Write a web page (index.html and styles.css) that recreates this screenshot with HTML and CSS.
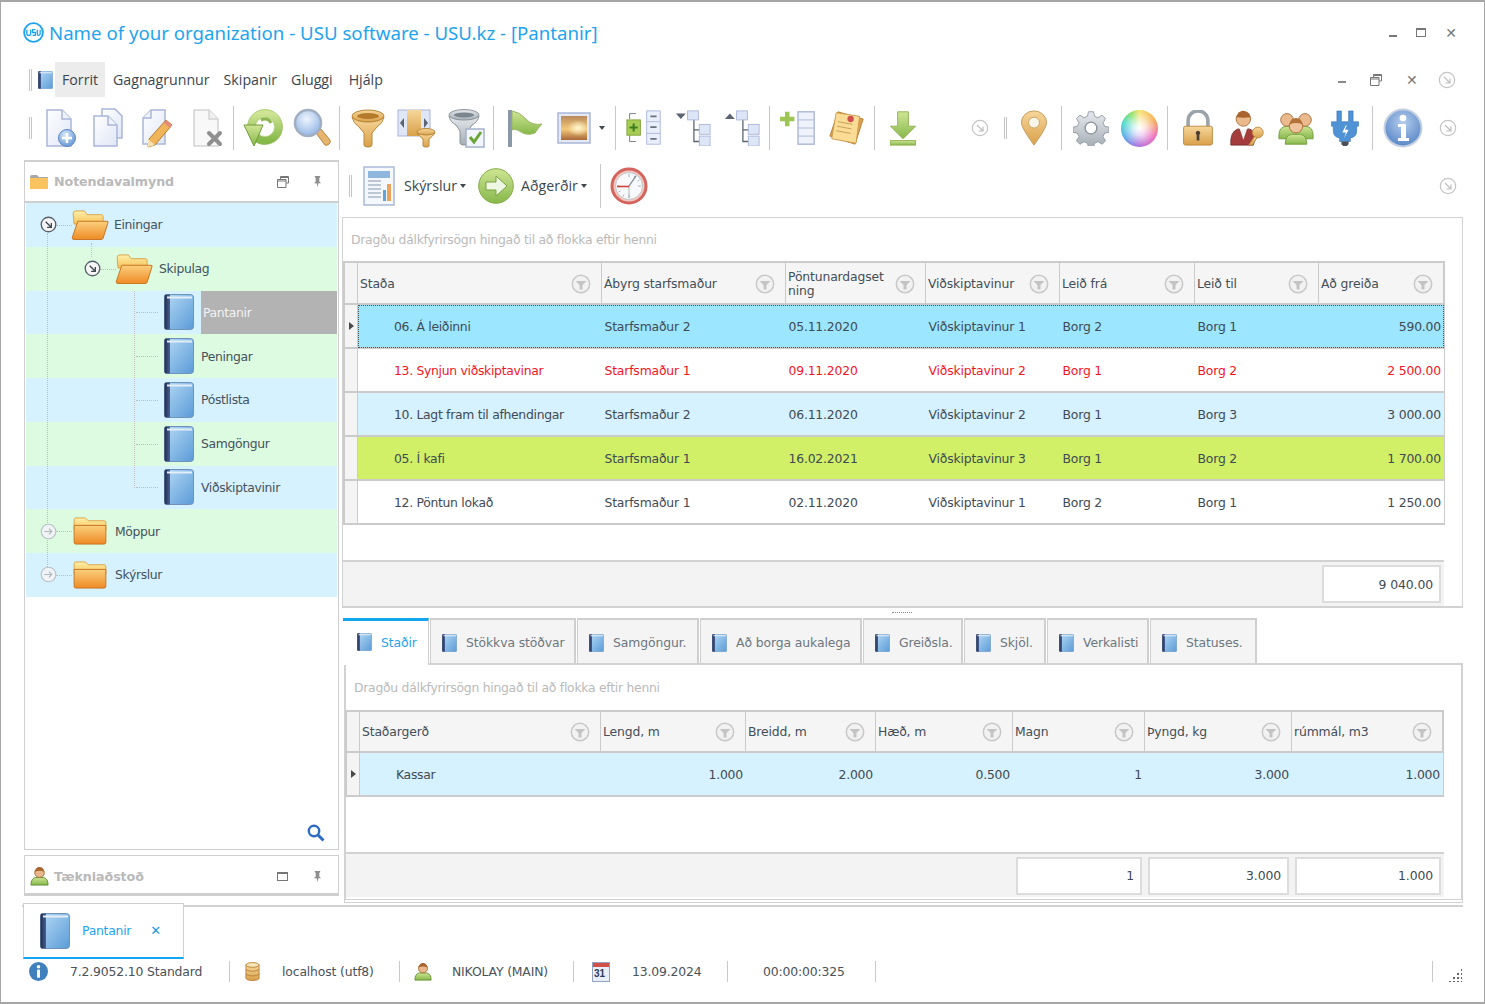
FILE: index.html
```html
<!DOCTYPE html>
<html lang="is">
<head>
<meta charset="utf-8">
<title>Name of your organization - USU software - USU.kz - [Pantanir]</title>
<link rel="stylesheet" href="styles.css">
</head>
<body>
<svg class="defs" aria-hidden="true">
<defs>
<linearGradient id="gBook" x1="0" y1="0" x2="1" y2="1"><stop offset="0" stop-color="#b5daf5"/><stop offset="1" stop-color="#5b9bd8"/></linearGradient>
<linearGradient id="gSpine" x1="0" y1="0" x2="1" y2="0"><stop offset="0" stop-color="#1f2c4d"/><stop offset="1" stop-color="#4a5f92"/></linearGradient>
<linearGradient id="gFolderB" x1="0" y1="0" x2="0" y2="1"><stop offset="0" stop-color="#fff0a8"/><stop offset="1" stop-color="#f6c05a"/></linearGradient>
<linearGradient id="gFolderF" x1="0" y1="0" x2="0" y2="1"><stop offset="0" stop-color="#fbd07c"/><stop offset="1" stop-color="#ee8a26"/></linearGradient>
<linearGradient id="gGold" x1="0" y1="0" x2="0" y2="1"><stop offset="0" stop-color="#f6d79a"/><stop offset="1" stop-color="#d9a04a"/></linearGradient>
<linearGradient id="gGreen" x1="0" y1="0" x2="0" y2="1"><stop offset="0" stop-color="#cfe595"/><stop offset="1" stop-color="#86b84a"/></linearGradient>
<linearGradient id="gPage" x1="0" y1="0" x2="1" y2="1"><stop offset="0" stop-color="#ffffff"/><stop offset="1" stop-color="#dfe6f6"/></linearGradient>
<linearGradient id="gGrey" x1="0" y1="0" x2="0" y2="1"><stop offset="0" stop-color="#e6e9ed"/><stop offset="1" stop-color="#a4adb5"/></linearGradient>
<radialGradient id="gBlue" cx=".4" cy=".3" r=".8"><stop offset="0" stop-color="#d6e8fb"/><stop offset="1" stop-color="#5b8fd0"/></radialGradient>
<radialGradient id="gBlueL" cx=".45" cy=".35" r=".75"><stop offset="0" stop-color="#eef5fd"/><stop offset="1" stop-color="#86ade2"/></radialGradient>
<radialGradient id="gInfo" cx=".5" cy=".35" r=".75"><stop offset="0" stop-color="#b6cdee"/><stop offset="1" stop-color="#4a7cc0"/></radialGradient>
<linearGradient id="gSun" x1="0" y1="0" x2="0" y2="1"><stop offset="0" stop-color="#b98a5c"/><stop offset=".55" stop-color="#f3c878"/><stop offset="1" stop-color="#a8683a"/></linearGradient>
<radialGradient id="gGlow"><stop offset="0" stop-color="#fff8d0"/><stop offset="1" stop-color="#fff8d0" stop-opacity="0"/></radialGradient>

<symbol id="i-book" viewBox="0 0 30 36"><rect x=".5" y=".5" width="29" height="35" rx="3" fill="url(#gBook)" stroke="#6f93ba"/><path d="M3 .5H1.5Q.5 .5 .5 2V34q0 1.500 1.500 1.500H6V.5z" fill="url(#gSpine)"/><path d="M3 3.500H28" stroke="#e4eef7" stroke-width="2"/></symbol>
<symbol id="i-fopen" viewBox="0 0 40 32"><path d="M2 4q0-3 3-3h9l3 4h15q2 0 2 2v8H3z" fill="url(#gFolderB)" stroke="#d9a349"/><path d="M7 12h31q2 0 1 2l-5 16q-.5 1.500-2 1.500H3q-2 0-2-2z" fill="url(#gFolderF)" stroke="#c5711c"/></symbol>
<symbol id="i-fclosed" viewBox="0 0 36 30"><path d="M1 3q0-2 2-2h10l3 3h17q2 0 2 2v8H1z" fill="url(#gFolderB)" stroke="#d9a349"/><path d="M1 9h34v18q0 2-2 2H3q-2 0-2-2z" fill="url(#gFolderF)" stroke="#c5711c"/></symbol>
<symbol id="i-page" viewBox="0 0 40 40"><path d="M8 2h15l9 9v27H8z" fill="url(#gPage)" stroke="#aab6d8" stroke-width="1.500"/><path d="M23 2v9h9" fill="#eef2fb" stroke="#aab6d8" stroke-width="1.500"/></symbol>
<symbol id="i-docadd" viewBox="0 0 40 40"><use href="#i-page"/><circle cx="28" cy="30" r="8.500" fill="url(#gBlue)" stroke="#5a88c2"/><path d="M28 25v10M23 30h10" stroke="#fff" stroke-width="2.500"/></symbol>
<symbol id="i-doccopy" viewBox="0 0 40 40"><path d="M14 1h13l7 7v22H14z" fill="url(#gPage)" stroke="#aab6d8" stroke-width="1.500"/><path d="M6 8h14l9 9v21H6z" fill="url(#gPage)" stroke="#aab6d8" stroke-width="1.500"/><path d="M20 8v9h9" fill="#eef2fb" stroke="#aab6d8" stroke-width="1.500"/></symbol>
<symbol id="i-docedit" viewBox="0 0 40 40"><path d="M14 2h14v34H6V10z" fill="url(#gPage)" stroke="#aab6d8" stroke-width="1.500"/><path d="M14 2v8H6" fill="#eef2fb" stroke="#aab6d8" stroke-width="1.500"/><path d="M29 12l6 5-17 20-7 2 1-8z" fill="#f0b45a" stroke="#b77e2e"/><path d="M29 12l6 5-2 3-6-5z" fill="#e88a7a"/><path d="M11 31l7 6-7 2z" fill="#f6e0b6"/></symbol>
<symbol id="i-docdel" viewBox="0 0 40 40"><path d="M8 2h15l9 9v27H8z" fill="#f8f8f8" stroke="#d4d4d4" stroke-width="1.500"/><path d="M23 2v9h9" fill="#f0f0f0" stroke="#d4d4d4" stroke-width="1.500"/><path d="M23 25l11 11M34 25L23 36" stroke="#8f8f8f" stroke-width="4" stroke-linecap="round"/></symbol>
<symbol id="i-refresh" viewBox="0 0 40 40"><circle cx="22" cy="19" r="13.500" fill="none" stroke="url(#gGreen)" stroke-width="8"/><circle cx="22" cy="19" r="17.500" fill="none" stroke="#8cb550" stroke-width=".6"/><circle cx="22" cy="19" r="9.500" fill="#fff" stroke="#a5c46a" stroke-width=".6"/><path d="M1 17h19L11 38z" fill="url(#gGreen)" stroke="#6e9c38"/><path d="M18 12q7-3 10 3" fill="none" stroke="#8cb550" stroke-width="3"/></symbol>
<symbol id="i-zoom" viewBox="0 0 40 40"><path d="M24 25l5-4 9 11q1 2-1 4t-4 1z" fill="#e6b46c" stroke="#b78540"/><circle cx="16" cy="15" r="13" fill="url(#gBlueL)" stroke="#a2aec2" stroke-width="2.500"/></symbol>
<symbol id="i-funnel" viewBox="0 0 40 40"><ellipse cx="20" cy="8" rx="16" ry="6" fill="url(#gGold)" stroke="#b9883c"/><path d="M4 9q1 6 7 10l5 6v12q0 2 4 2t4-2V25l5-6q6-4 7-10-4 5-16 5T4 9z" fill="url(#gGold)" stroke="#b9883c"/><ellipse cx="20" cy="8" rx="11" ry="3" fill="#b57a2c"/></symbol>
<symbol id="i-colfilter" viewBox="0 0 40 40"><rect x="1" y="2" width="32" height="26" fill="#dfe6f6" stroke="#aab6d8"/><rect x="10" y="2" width="14" height="26" fill="url(#gGold)"/><path d="M7 10l-4 5 4 5zM27 10l4 5-4 5z" fill="#5b6472"/><ellipse cx="29" cy="24" rx="9" ry="3.500" fill="url(#gGold)" stroke="#b9883c"/><path d="M20 25q2 3 6 6v7q0 1 3 1t3-1v-7q4-3 6-6-3 2-9 2t-9-2z" fill="url(#gGold)" stroke="#b9883c"/></symbol>
<symbol id="i-funnelchk" viewBox="0 0 40 40"><ellipse cx="18" cy="7" rx="15" ry="5.500" fill="url(#gGrey)" stroke="#8b949c"/><path d="M3 8q1 6 7 9l4 6v12q0 2 4 2t4-2V23l4-6q6-3 7-9-4 4-15 4T3 8z" fill="url(#gGrey)" stroke="#8b949c"/><ellipse cx="18" cy="7" rx="10" ry="2.600" fill="#7b858d"/><rect x="20" y="21" width="18" height="18" fill="#f2f5fb" stroke="#a4b0ce" stroke-width="1.500"/><path d="M24 29l4 5 7-10" stroke="#6aa637" stroke-width="3" fill="none"/></symbol>
<symbol id="i-flag" viewBox="0 0 40 40"><rect x="3" y="2" width="4" height="37" fill="#8b98a8"/><path d="M7 3q8 1 14 8t16 5q-4 4-7 9-8 3-14-1t-9-2z" fill="url(#gGreen)" stroke="#9ab866"/></symbol>
<symbol id="i-pic" viewBox="0 0 40 40"><rect x="4" y="5" width="32" height="30" fill="#e4e9f6" stroke="#aab6d8" stroke-width="1.500"/><rect x="7" y="8" width="26" height="24" fill="url(#gSun)"/><ellipse cx="24" cy="20" rx="11" ry="8" fill="url(#gGlow)"/></symbol>
<symbol id="i-treeplus" viewBox="0 0 40 40"><rect x="23" y="1" width="15" height="37" fill="#eaf0fb" stroke="#aab6d8"/><path d="M23 13h15M23 26h15" stroke="#aab6d8"/><path d="M27 7h7M27 19h7M27 32h7" stroke="#6a7280" stroke-width="2"/><path d="M4 10V4h7M4 28v7h7" fill="none" stroke="#6a7280"/><rect x="1" y="11" width="15" height="17" fill="#a6cc54" stroke="#7fa33a"/><path d="M8.500 15v9M4 19.500h9" stroke="#3f7a1f" stroke-width="2.200"/></symbol>
<symbol id="i-treedn" viewBox="0 0 40 40"><path d="M1 4h11l-5.500 6z" fill="#5b6472"/><path d="M21 8v27h10M21 22h10" fill="none" stroke="#59626e" stroke-width="1.400"/><rect x="14" y="1" width="12" height="10" fill="#dde6f6" stroke="#aab6d8"/><rect x="27" y="16" width="12" height="11" fill="#dde6f6" stroke="#aab6d8"/><rect x="27" y="29" width="12" height="11" fill="#dde6f6" stroke="#aab6d8"/></symbol>
<symbol id="i-treeup" viewBox="0 0 40 40"><path d="M1 10h11L6.500 4z" fill="#5b6472"/><path d="M21 8v27h10M21 22h10" fill="none" stroke="#59626e" stroke-width="1.400"/><rect x="14" y="1" width="12" height="10" fill="#dde6f6" stroke="#aab6d8"/><rect x="27" y="16" width="12" height="11" fill="#dde6f6" stroke="#aab6d8"/><rect x="27" y="29" width="12" height="11" fill="#dde6f6" stroke="#aab6d8"/></symbol>
<symbol id="i-addrow" viewBox="0 0 40 40"><rect x="20" y="2" width="18" height="36" fill="#eef2fb" stroke="#aab6d8" stroke-width="1.500"/><path d="M20 11h18M20 20h18M20 29h18" stroke="#aab6d8"/><path d="M8 2v16M0 10h16" stroke="#9cc553" stroke-width="5"/></symbol>
<symbol id="i-note" viewBox="0 0 40 40"><path d="M10 2l28 8-9 28-28-9z" fill="#d9a050" stroke="#b87f35"/><path d="M8 3l26 4-4 30L3 32z" fill="#fbdc94" stroke="#c99a4c"/><path d="M10 13l16 3M9 18l16 3M8 23l16 3" stroke="#c09a58"/><circle cx="24" cy="10" r="3.500" fill="#d24f4f"/></symbol>
<symbol id="i-down" viewBox="0 0 40 40"><path d="M14 2h12v16h8L20 32 6 18h8z" fill="url(#gGreen)" stroke="#8fb050"/><rect x="6" y="34" width="28" height="5" fill="url(#gGreen)" stroke="#8fb050"/></symbol>
<symbol id="i-pin" viewBox="0 0 40 40"><path d="M20 39Q6 20 6 14a14 13 0 0 1 28 0q0 6-14 25z" fill="url(#gGold)" stroke="#c0995a"/><circle cx="20" cy="14" r="6" fill="#f8f4e8" stroke="#c6a262"/></symbol>
<symbol id="i-gear" viewBox="0 0 40 40"><path d="M17 1h6l1 5 4 2 5-3 4 4-3 5 2 4 5 1v6l-5 1-2 4 3 5-4 4-5-3-4 2-1 5h-6l-1-5-4-2-5 3-4-4 3-5-2-4-5-1v-6l5-1 2-4-3-5 4-4 5 3 4-2z" transform="translate(1 1) scale(.95)" fill="url(#gGrey)" stroke="#8b949c"/><circle cx="20" cy="20" r="6.500" fill="#fff" stroke="#8b949c" stroke-width="1.500"/></symbol>
<symbol id="i-lock" viewBox="0 0 40 40"><path d="M9 20V12a11 11 0 0 1 22 0v8" fill="none" stroke="#9aa3ab" stroke-width="4"/><rect x="4" y="18" width="32" height="21" rx="2" fill="url(#gGold)" stroke="#b9883c"/><path d="M20 23a2.500 2.500 0 0 1 1.500 4.500V34h-3v-6.500A2.500 2.500 0 0 1 20 23z" fill="#4d4032"/></symbol>
<symbol id="i-userkey" viewBox="0 0 40 40"><circle cx="16" cy="10" r="8" fill="#eab98e" stroke="#a86c38"/><path d="M8 8q3-8 9-7t7 7q-8 1-16 0z" fill="#a8652f"/><path d="M2 39q-1-15 8-18 6 3 12 0 7 2 8 8l-3 10z" fill="#a33c3c" stroke="#7a2c2c"/><path d="M12 21h8l-4 12z" fill="#f4f4f4"/><circle cx="32" cy="25" r="6" fill="url(#gGold)" stroke="#b9883c"/><path d="M28 30l-6 9h4l5-8" fill="url(#gGold)" stroke="#b9883c"/></symbol>
<symbol id="i-group" viewBox="0 0 40 40"><path d="M1 28q0-9 8-10h22q8 1 8 10v4H1z" fill="url(#gGreen)" stroke="#6f9c3c"/><circle cx="10" cy="11" r="7" fill="#eab98e" stroke="#a86c38"/><circle cx="30" cy="11" r="7" fill="#eab98e" stroke="#a86c38"/><path d="M8 38q0-10 7-11h10q7 1 7 11z" fill="url(#gGreen)" stroke="#6f9c3c"/><circle cx="20" cy="18" r="7.500" fill="#efc49c" stroke="#a86c38"/><path d="M13 16q1-7 7-7t7 7q-7-3-14 0z" fill="#b37238"/></symbol>
<symbol id="i-plug" viewBox="0 0 40 40"><path d="M11 1h5v12h8V1h5v12h6v5h-2v5q0 7-7 8v4H14v-4q-7-1-7-8v-5H5v-5h6z" fill="#4f93d6" stroke="#2f6eab" stroke-width=".6"/><path d="M21 17l-4 8h4l-2 6 5-9h-4l2-5z" fill="#fff"/><path d="M16 35h8v3l-2 2h-4l-2-2z" fill="#4a4f55"/></symbol>
<symbol id="i-info" viewBox="0 0 40 40"><circle cx="20" cy="20" r="18.500" fill="url(#gInfo)" stroke="#c4d0e2" stroke-width="2"/><circle cx="20" cy="10" r="3.300" fill="#fff"/><path d="M15 16h8v14h3v3H15v-3h3V19h-3z" fill="#fff"/></symbol>
<symbol id="i-report" viewBox="0 0 32 40"><rect x="1" y="1" width="30" height="38" fill="#f4f7fc" stroke="#a9bad6" stroke-width="1.500"/><rect x="5" y="5" width="22" height="7" fill="#8fb6dd"/><path d="M5 15h13M5 19h13M5 23h13M5 27h13M5 31h13" stroke="#8696ad"/><rect x="20" y="24" width="3" height="11" fill="#5ea3dc"/><rect x="24" y="18" width="4" height="17" fill="#e9a45a"/></symbol>
<symbol id="i-go" viewBox="0 0 36 36"><circle cx="18" cy="18" r="17.300" fill="url(#gGreen)" stroke="#86ad46"/><path d="M8 14h10V8l11 10-11 10v-6H8z" fill="#eef6e4" stroke="#7ba040"/></symbol>
<symbol id="i-clock" viewBox="0 0 38 38"><circle cx="19" cy="19" r="17" fill="#f6c6c0" stroke="#d4645e" stroke-width="3"/><circle cx="19" cy="19" r="13.500" fill="#f7f9fb" stroke="#c0c6cc"/><path d="M19 7v3M19 28v3M7 19h3M28 19h3M25 8.500l-1 2M13 29.500l1-2M29.500 13l-2 1M8.500 25l2-1" stroke="#aab2ba"/><path d="M19 19l7-10" stroke="#7d8690" stroke-width="1.300"/><path d="M19 19V31" stroke="#9aa2aa" stroke-width=".8"/><path d="M7 19.500h12" stroke="#d2423c" stroke-width="1.600"/></symbol>
<symbol id="i-user" viewBox="0 0 20 20"><path d="M1 19q0-7 5-8h8q5 1 5 8z" fill="url(#gGreen)" stroke="#5d8f2e"/><circle cx="10" cy="6" r="5" fill="#e8b88c" stroke="#a86c38"/><path d="M5 5q1-5 5-5t5 5q-5-2-10 0z" fill="#a8652f"/></symbol>
<symbol id="i-db" viewBox="0 0 16 20"><path d="M1 3v14q0 2.500 7 2.500t7-2.500V3z" fill="url(#gGold)" stroke="#b9813c"/><ellipse cx="8" cy="3" rx="7" ry="2.500" fill="#fbe7b8" stroke="#b9813c"/><path d="M1 8q7 3.500 14 0M1 13q7 3.500 14 0" fill="none" stroke="#b9813c"/></symbol>
<symbol id="i-cal" viewBox="0 0 18 20"><rect x=".5" y=".5" width="17" height="19" fill="#e8eef8" stroke="#93a3c0"/><rect x="1" y="1" width="16" height="4" fill="#d2504a"/></symbol>
<symbol id="i-stinfo" viewBox="0 0 20 20"><circle cx="10" cy="10" r="10" fill="#3f80bd"/><circle cx="10" cy="5" r="1.800" fill="#fff"/><rect x="8.500" y="8" width="3" height="8.500" fill="#fff"/></symbol>
<symbol id="i-logo" viewBox="0 0 22 22"><circle cx="11" cy="11" r="9.800" fill="#fff" stroke="#1ea4ee" stroke-width="2"/><path d="M4 8v4q0 2 2 2t2-2V8M13 8h-3v3h3v3h-3M15 8v4q0 2 1.500 2t1.500-2V8" fill="none" stroke="#1ea4ee" stroke-width="1.400"/></symbol>
<symbol id="i-fsm" viewBox="0 0 20 20"><circle cx="10" cy="10" r="8.700" fill="#f2f2f2" stroke="#c9c9c9" stroke-width="1.500"/><path d="M4.500 7h11L11.500 11v4.500h-3V11z" fill="#c4c4c4"/></symbol>
<symbol id="i-circ" viewBox="0 0 18 18"><circle cx="9" cy="9" r="7.700" fill="none" stroke="#c4c4c4" stroke-width="1.200"/><path d="M6 6l6 6M12 7.500V12H7.500" fill="none" stroke="#bdbdbd" stroke-width="1.200"/></symbol>
<symbol id="i-exp" viewBox="0 0 18 18"><circle cx="9" cy="9" r="7.700" fill="#f6f6f6" stroke="#55606a" stroke-width="1.400"/><path d="M6 6l6 6M12 7.500V12H7.500" fill="none" stroke="#3f4850" stroke-width="1.400"/></symbol>
<symbol id="i-col" viewBox="0 0 18 18"><circle cx="9" cy="9" r="7.700" fill="#f0f4f6" stroke="#b9c2c6" stroke-width="1.200"/><path d="M4.500 9h8M9.500 6l3 3-3 3" fill="none" stroke="#b0b8bc" stroke-width="1.200"/></symbol>
<symbol id="i-restore" viewBox="0 0 12 12"><path d="M3.500 3V.5h8V7H9M.5 3.500h8.500v8H.5z" fill="none" stroke="#777"/><path d="M.5 5h8.500M3.500 1.500h8" stroke="#777"/></symbol>
<symbol id="i-tack" viewBox="0 0 10 12"><path d="M2 0h6v1L7 2v4l2 2H6L5 12 4 8H1l2-2V2L2 1z" fill="#8f8f8f"/></symbol>
<symbol id="i-search" viewBox="0 0 18 18"><circle cx="7" cy="7" r="5.200" fill="none" stroke="#2d6cc0" stroke-width="2.400"/><path d="M11 11l5.500 5.500" stroke="#2d6cc0" stroke-width="3"/></symbol>
<symbol id="i-fold" viewBox="0 0 18 14"><path d="M0 2q0-2 2-2h5l2 2h9v2H0z" fill="#a8a8a8"/><rect y="3" width="18" height="11" fill="#fbc35f"/></symbol>
</defs>
</svg>

<div class="win">
  <header class="titlebar">
    <svg class="ic-logo"><use href="#i-logo"/></svg>
    <h1 class="title">Name of your organization - USU software - USU.kz - [Pantanir]</h1>
    <div class="winbtns">
      <span class="wb-min"></span><span class="wb-max"></span><span class="wb-x">✕</span>
    </div>
  </header>

  <nav class="menubar">
    <span class="grip"></span>
    <svg class="ic-menubook"><use href="#i-book"/></svg>
    <span class="menu active">Forrit</span><span class="menu">Gagnagrunnur</span><span class="menu">Skipanir</span><span class="menu">Gluggi</span><span class="menu m-last">Hjálp</span>
    <div class="menuright">
      <span class="mr-min"></span>
      <svg class="ic-restore"><use href="#i-restore"/></svg>
      <span class="mr-x">✕</span>
      <svg class="ic-circ"><use href="#i-circ"/></svg>
    </div>
  </nav>

  <div class="toolbar">
    <span class="grip"></span>
    <span class="tb"><svg><use href="#i-docadd"/></svg></span>
    <span class="tb"><svg><use href="#i-doccopy"/></svg></span>
    <span class="tb"><svg><use href="#i-docedit"/></svg></span>
    <span class="tb"><svg><use href="#i-docdel"/></svg></span>
    <span class="sep m8"></span>
    <span class="tb"><svg><use href="#i-refresh"/></svg></span>
    <span class="tb"><svg><use href="#i-zoom"/></svg></span>
    <span class="sep"></span>
    <span class="tb"><svg><use href="#i-funnel"/></svg></span>
    <span class="tb"><svg><use href="#i-colfilter"/></svg></span>
    <span class="tb"><svg><use href="#i-funnelchk"/></svg></span>
    <span class="sep wide"></span>
    <span class="tb"><svg><use href="#i-flag"/></svg></span>
    <span class="tb"><svg><use href="#i-pic"/></svg></span>
    <span class="caret-box"><i class="caret"></i></span>
    <span class="sep"></span>
    <span class="tb sm"><svg><use href="#i-treeplus"/></svg></span>
    <span class="tb sm"><svg><use href="#i-treedn"/></svg></span>
    <span class="tb sm"><svg><use href="#i-treeup"/></svg></span>
    <span class="sep"></span>
    <span class="tb sm"><svg><use href="#i-addrow"/></svg></span>
    <span class="tb sm"><svg><use href="#i-note"/></svg></span>
    <span class="sep"></span>
    <span class="tb sm"><svg><use href="#i-down"/></svg></span>
    <div class="tb-right">
      <svg class="ic-circ"><use href="#i-circ"/></svg>
      <span class="grip slim"></span>
      <span class="tb sm"><svg><use href="#i-pin"/></svg></span>
      <span class="sep m8"></span>
      <span class="tb sm"><svg><use href="#i-gear"/></svg></span>
      <span class="tb"><span class="wheel"></span></span>
      <span class="sep m9"></span>
      <span class="tb sm"><svg><use href="#i-lock"/></svg></span>
      <span class="tb sm"><svg><use href="#i-userkey"/></svg></span>
      <span class="tb sm"><svg><use href="#i-group"/></svg></span>
      <span class="tb sm"><svg><use href="#i-plug"/></svg></span>
      <span class="sep m9"></span>
      <span class="tb"><svg><use href="#i-info"/></svg></span>
      <svg class="ic-circ end"><use href="#i-circ"/></svg>
    </div>
  </div>

  <main class="main">
    <aside class="side">
      <section class="panel-nav">
        <div class="panel-head">
          <svg class="ic-fold"><use href="#i-fold"/></svg>
          <span class="ph-title">Notendavalmynd</span>
          <svg class="ic-restore"><use href="#i-restore"/></svg>
          <svg class="ic-tack"><use href="#i-tack"/></svg>
        </div>
        <div class="tree">
          <span class="vl vl-a"></span><span class="vl vl-b"></span><span class="vl vl-c"></span>
          <div class="tr blue lv1"><svg class="ic-exp"><use href="#i-exp"/></svg><svg class="ic-fopen"><use href="#i-fopen"/></svg><span class="tl">Einingar</span></div>
          <div class="tr green lv2"><svg class="ic-exp"><use href="#i-exp"/></svg><svg class="ic-fopen"><use href="#i-fopen"/></svg><span class="tl">Skipulag</span></div>
          <div class="tr blue lv3"><svg class="ic-book"><use href="#i-book"/></svg><span class="tl sel">Pantanir</span></div>
          <div class="tr green lv3"><svg class="ic-book"><use href="#i-book"/></svg><span class="tl">Peningar</span></div>
          <div class="tr blue lv3"><svg class="ic-book"><use href="#i-book"/></svg><span class="tl">Póstlista</span></div>
          <div class="tr green lv3"><svg class="ic-book"><use href="#i-book"/></svg><span class="tl">Samgöngur</span></div>
          <div class="tr blue lv3"><svg class="ic-book"><use href="#i-book"/></svg><span class="tl">Viðskiptavinir</span></div>
          <div class="tr green lv1"><svg class="ic-exp col"><use href="#i-col"/></svg><svg class="ic-fclosed"><use href="#i-fclosed"/></svg><span class="tl">Möppur</span></div>
          <div class="tr blue lv1"><svg class="ic-exp col"><use href="#i-col"/></svg><svg class="ic-fclosed"><use href="#i-fclosed"/></svg><span class="tl">Skýrslur</span></div>
          <div class="tree-foot"><svg class="ic-search"><use href="#i-search"/></svg></div>
        </div>
      </section>
      <section class="panel-head solo">
        <svg class="ic-user"><use href="#i-user"/></svg>
        <span class="ph-title">Tækniaðstoð</span>
        <span class="ic-win"></span>
        <svg class="ic-tack"><use href="#i-tack"/></svg>
      </section>
    </aside>

    <div class="content">
      <div class="toolbar2">
        <span class="grip"></span>
        <svg class="ic-report"><use href="#i-report"/></svg>
        <span class="t2-label">Skýrslur</span><i class="caret"></i>
        <svg class="ic-go"><use href="#i-go"/></svg>
        <span class="t2-label">Aðgerðir</span><i class="caret"></i>
        <span class="sep t2-sep"></span>
        <svg class="ic-clock"><use href="#i-clock"/></svg>
        <svg class="ic-circ end"><use href="#i-circ"/></svg>
      </div>

      <section class="gridbox top">
        <div class="hint">Dragðu dálkfyrirsögn hingað til að flokka eftir henni</div>
        <div class="grid g1">
          <div class="row head">
            <span class="ind"></span>
            <span class="hc">Staða<svg class="ic-fsm"><use href="#i-fsm"/></svg></span>
            <span class="hc">Ábyrg starfsmaður<svg class="ic-fsm"><use href="#i-fsm"/></svg></span>
            <span class="hc">Pöntunardagset ning<svg class="ic-fsm"><use href="#i-fsm"/></svg></span>
            <span class="hc">Viðskiptavinur<svg class="ic-fsm"><use href="#i-fsm"/></svg></span>
            <span class="hc">Leið frá<svg class="ic-fsm"><use href="#i-fsm"/></svg></span>
            <span class="hc">Leið til<svg class="ic-fsm"><use href="#i-fsm"/></svg></span>
            <span class="hc">Að greiða<svg class="ic-fsm"><use href="#i-fsm"/></svg></span>
          </div>
          <div class="row r-sel">
            <span class="ind"><i class="tri"></i></span>
            <span class="c first">06. Á leiðinni</span><span class="c">Starfsmaður 2</span><span class="c">05.11.2020</span><span class="c">Viðskiptavinur 1</span><span class="c">Borg 2</span><span class="c">Borg 1</span><span class="c num">590.00</span>
          </div>
          <div class="row r-red">
            <span class="ind"></span>
            <span class="c first">13. Synjun viðskiptavinar</span><span class="c">Starfsmaður 1</span><span class="c">09.11.2020</span><span class="c">Viðskiptavinur 2</span><span class="c">Borg 1</span><span class="c">Borg 2</span><span class="c num">2 500.00</span>
          </div>
          <div class="row r-blue">
            <span class="ind"></span>
            <span class="c first">10. Lagt fram til afhendingar</span><span class="c">Starfsmaður 2</span><span class="c">06.11.2020</span><span class="c">Viðskiptavinur 2</span><span class="c">Borg 1</span><span class="c">Borg 3</span><span class="c num">3 000.00</span>
          </div>
          <div class="row r-lime">
            <span class="ind"></span>
            <span class="c first">05. Í kafi</span><span class="c">Starfsmaður 1</span><span class="c">16.02.2021</span><span class="c">Viðskiptavinur 3</span><span class="c">Borg 1</span><span class="c">Borg 2</span><span class="c num">1 700.00</span>
          </div>
          <div class="row">
            <span class="ind"></span>
            <span class="c first">12. Pöntun lokað</span><span class="c">Starfsmaður 1</span><span class="c">02.11.2020</span><span class="c">Viðskiptavinur 1</span><span class="c">Borg 2</span><span class="c">Borg 1</span><span class="c num">1 250.00</span>
          </div>
        </div>
        <div class="gridfill"></div>
        <div class="sumbar"><span class="sum s-main">9 040.00</span></div>
      </section>

      <div class="splitter"></div>

      <div class="tabs">
        <span class="tab active"><svg><use href="#i-book"/></svg>Staðir</span>
        <span class="tab t2"><svg><use href="#i-book"/></svg>Stökkva stöðvar</span>
        <span class="tab t3"><svg><use href="#i-book"/></svg>Samgöngur.</span>
        <span class="tab t4"><svg><use href="#i-book"/></svg>Að borga aukalega</span>
        <span class="tab t5"><svg><use href="#i-book"/></svg>Greiðsla.</span>
        <span class="tab t6"><svg><use href="#i-book"/></svg>Skjöl.</span>
        <span class="tab t7"><svg><use href="#i-book"/></svg>Verkalisti</span>
        <span class="tab t8"><svg><use href="#i-book"/></svg>Statuses.</span>
      </div>

      <section class="gridbox bottom">
        <div class="hint">Dragðu dálkfyrirsögn hingað til að flokka eftir henni</div>
        <div class="grid g2">
          <div class="row head">
            <span class="ind"></span>
            <span class="hc">Staðargerð<svg class="ic-fsm"><use href="#i-fsm"/></svg></span>
            <span class="hc">Lengd, m<svg class="ic-fsm"><use href="#i-fsm"/></svg></span>
            <span class="hc">Breidd, m<svg class="ic-fsm"><use href="#i-fsm"/></svg></span>
            <span class="hc">Hæð, m<svg class="ic-fsm"><use href="#i-fsm"/></svg></span>
            <span class="hc">Magn<svg class="ic-fsm"><use href="#i-fsm"/></svg></span>
            <span class="hc">Þyngd, kg<svg class="ic-fsm"><use href="#i-fsm"/></svg></span>
            <span class="hc">rúmmál, m3<svg class="ic-fsm"><use href="#i-fsm"/></svg></span>
          </div>
          <div class="row r-blue">
            <span class="ind"><i class="tri"></i></span>
            <span class="c first">Kassar</span><span class="c num">1.000</span><span class="c num">2.000</span><span class="c num">0.500</span><span class="c num">1</span><span class="c num">3.000</span><span class="c num">1.000</span>
          </div>
        </div>
        <div class="gridfill"></div>
        <div class="sumbar"><span class="sum s1">1</span><span class="sum s2">3.000</span><span class="sum s3">1.000</span></div>
      </section>
    </div>
  </main>

  <div class="doctabs">
    <span class="doctab"><svg><use href="#i-book"/></svg><span class="dt-label">Pantanir</span><span class="dt-x">✕</span></span>
  </div>

  <footer class="status">
    <span class="st st1"><svg class="s-info"><use href="#i-stinfo"/></svg><span>7.2.9052.10 Standard</span></span>
    <span class="st st2"><svg class="s-db"><use href="#i-db"/></svg><span>localhost (utf8)</span></span>
    <span class="st st3"><svg class="s-user"><use href="#i-user"/></svg><span>NIKOLAY (MAIN)</span></span>
    <span class="st st4"><span class="s-cal"><svg><use href="#i-cal"/></svg><b>31</b></span><span>13.09.2024</span></span>
    <span class="st st5"><span>00:00:00:325</span></span>
    <span class="st-end"><i class="resize"></i></span>
  </footer>
</div>
</body>
</html>
```

FILE: styles.css
```css
* { box-sizing: border-box; }
html, body { margin: 0; padding: 0; background: #fff; }
body { font-family: "DejaVu Sans", "Liberation Sans", sans-serif; font-size: 12.4px; color: #3f4a54; overflow: hidden; }
svg { display: block; flex: none; }
.defs { position: absolute; width: 0; height: 0; }

.win { width: 1485px; height: 1004px; border: 1px solid #a6a6a6; border-top-width: 2px; border-bottom-width: 2px; display: flex; flex-direction: column; background: #fff; position: relative; }

/* title */
.titlebar { height: 60px; flex: none; display: flex; align-items: center; padding: 1px 27px 0 22px; }
.ic-logo { width: 21px; height: 21px; margin-right: 5px; }
.title { margin: 0; font: 400 18.65px "Noto Sans", sans-serif; color: #1ea4ee; white-space: nowrap; }
.winbtns { margin-left: auto; display: flex; align-items: center; gap: 19px; color: #777; }
.wb-min { width: 8px; height: 2px; background: #777; margin-top: 6px; }
.wb-max { width: 10px; height: 9px; border: 1px solid #777; border-top-width: 2px; }
.wb-x { font-size: 14px; line-height: 1; }

/* menu */
.menubar { height: 35px; flex: none; display: flex; align-items: stretch; padding-left: 28px; font: 14.2px "Open Sans", sans-serif; color: #3a4650; }
.grip { width: 3px; height: 22px; border-left: 1px solid #c4c4c4; border-right: 1px solid #c4c4c4; align-self: center; flex: none; }
.ic-menubook { width: 15px; height: 18px; align-self: center; margin: 0 2px 0 6px; }
.menu { display: flex; align-items: center; padding: 0 7px; }
.menu.active { background: #ececec; width: 50px; margin-right: 1px; }
.menu.m-last { margin-left: 2px; }
.menuright { margin-left: auto; display: flex; align-items: center; padding-right: 28px; color: #777; }
.mr-min { width: 8px; height: 2px; background: #8a8a8a; margin: 5px 0 0; }
.ic-restore { width: 12px; height: 12px; }
.menuright .ic-restore { margin-left: 24px; }
.mr-x { font-size: 14px; margin-left: 24px; }
.menuright .ic-circ { margin-left: 20px; }
.ic-circ { width: 18px; height: 18px; }

/* toolbar */
.toolbar { height: 52px; margin-top: 5px; flex: none; display: flex; align-items: center; padding-left: 28px; }
.toolbar > .grip { height: 22px; margin-right: 2px; }
.tb { width: 49px; height: 44px; flex: none; display: flex; align-items: center; justify-content: center; }
.tb svg { width: 40px; height: 40px; }
.tb.sm svg { width: 36px; height: 36px; }
.wheel { width: 37px; height: 37px; border-radius: 50%; background: radial-gradient(circle, #fff 0, rgba(255,255,255,.75) 25%, rgba(255,255,255,0) 72%), conic-gradient(#f6e064, #f6a64a 60deg, #ee5fb8 120deg, #a06ae0 190deg, #4fa6e8 240deg, #3fd6c8 290deg, #7fe060 330deg, #f6e064); }
.sep { flex: none; width: 7px; height: 44px; position: relative; }
.sep::before { content: ""; position: absolute; left: 3px; top: 0; bottom: 0; width: 1px; background: #c8c8c8; }
.sep.wide { width: 10px; }
.sep.m8 { width: 8px; }
.sep.m9 { width: 9px; }
.caret-box { width: 14px; display: flex; justify-content: flex-start; padding-left: 1px; }
.caret { display: inline-block; width: 0; height: 0; border-left: 3.500px solid transparent; border-right: 3.500px solid transparent; border-top: 4px solid #40484f; flex: none; }
.tb-right { margin-left: auto; display: flex; align-items: center; padding-right: 27px; }
.tb-right > .ic-circ:first-child { margin-right: 15px; }
.grip.slim { margin-right: 2px; }
.ic-circ.end { margin-left: 12px; }

/* main */
.main { height: 745px; margin-top: 6px; flex: none; display: flex; padding-left: 23px; gap: 3px; }
.side { width: 315px; flex: none; display: flex; flex-direction: column; gap: 5px; }
.panel-nav { height: 690px; border: 1px solid #cfcfcf; display: flex; flex-direction: column; border-width: 2px 1px 1px; }
.panel-head { height: 41px; flex: none; display: flex; align-items: center; padding: 0 16px 0 5px; border-bottom: 2px solid #cfcfcf; }
.panel-head.solo { height: 41px; border: 1px solid #cfcfcf; border-bottom-width: 3px; padding-top: 3px; }
.ic-fold { width: 18px; height: 14px; margin-right: 6px; }
.ic-user { width: 19px; height: 19px; margin-right: 5px; }
.ph-title { font-weight: 700; color: #b9b9b9; font-size: 12.7px; flex: 1; letter-spacing: -.1px; }
.panel-head .ic-restore { margin-right: 24px; }
.ic-win { width: 11px; height: 9px; border: 1px solid #777; border-top-width: 2px; margin-right: 25px; }
.ic-tack { width: 9px; height: 11px; }

.tree { flex: 1; position: relative; padding: 0 1px; display: flex; flex-direction: column; }
.tr { height: 43.75px; flex: none; display: flex; align-items: center; position: relative; }
.blue { background: #d6f1ff; }
.green { background: #dcfbe0; }
.tl { color: #46525c; letter-spacing: -.35px; }
.lv1 { padding-left: 14px; }
.lv2 { padding-left: 58px; }
.lv3 { padding-left: 138px; }
.ic-exp { width: 17px; height: 17px; margin-right: 14px; position: relative; z-index: 1; }
.ic-fopen { width: 38px; height: 30px; margin-right: 5px; position: relative; z-index: 1; }
.ic-fclosed { width: 36px; height: 28px; margin: 0 7px 0 1px; position: relative; z-index: 1; }
.lv2 .ic-fopen { margin-right: 6px; }
.ic-book { width: 30px; height: 36px; margin-right: 7px; }
.lv1::before, .lv2::before, .lv3::before { content: ""; position: absolute; border-top: 1px dotted #bdbdbd; top: 50%; }
.lv1::before { left: 30px; width: 16px; }
.lv2::before { left: 74px; width: 16px; }
.lv3::before { left: 110px; width: 22px; }
.tl.sel { align-self: stretch; flex: 1; background: #b3b3b3; color: #f2f2f2; display: flex; align-items: center; padding-left: 2px; }
.vl { position: absolute; border-left: 1px dotted #bdbdbd; z-index: 1; }
.vl-a { left: 22px; top: 30px; height: 342px; }
.vl-b { left: 66px; top: 40px; height: 14px; }
.vl-c { left: 109px; top: 88px; height: 197px; }
.tree-foot { flex: 1; display: flex; align-items: flex-end; justify-content: flex-end; padding: 0 12px 7px 0; }
.ic-search { width: 18px; height: 18px; }

/* content */
.content { flex: 1; min-width: 0; display: flex; flex-direction: column; padding-right: 21px; }
.toolbar2 { height: 57px; flex: none; display: flex; align-items: center; padding: 0 6px 6px 7px; font: 14.2px "Open Sans", sans-serif; color: #3a4650; }
.ic-report { width: 32px; height: 40px; margin: 0 9px 0 11px; }
.ic-go { width: 36px; height: 36px; margin: 0 7px 0 12px; }
.t2-label { margin-right: 3px; white-space: nowrap; }
.t2-sep { margin: 0 6px 0 10px; }
.ic-clock { width: 38px; height: 38px; }
.toolbar2 .end { margin-left: auto; }

.gridbox { display: flex; flex-direction: column; border: 1px solid #d2d2d2; flex: none; }
.gridbox.top { height: 391px; border-bottom-width: 2px; }
.gridbox.bottom { height: 240px; margin-left: 2px; border-width: 2px; border-bottom-width: 4px; border-bottom-style: double; }
.hint { height: 43px; flex: none; display: flex; align-items: center; padding-left: 8px; color: #bababa; letter-spacing: -.27px; }
.bottom .hint { height: 45px; }
.grid { flex: none; border: 2px solid #cbcbcb; border-right-width: 1px; border-bottom: 0; }
.g1 { width: 1102px; --cols: 13px 244px 184px 140px 134px 135px 124px 125px; }
.g2 { width: 1099px; margin-left: -1px; --cols: 13px 241px 145px 130px 137px 132px 147px 151px; }
.row { display: grid; grid-template-columns: var(--cols); height: 44px; border-bottom: 2px solid #cbcbcb; position: relative; }
.row.head { height: 42px; }
.g2 .row.head { height: 41px; }
.ind { background: #f4f4f4; border-right: 1px solid #cbcbcb; display: flex; align-items: center; justify-content: center; }
.tri { width: 0; height: 0; border-top: 4px solid transparent; border-bottom: 4px solid transparent; border-left: 5px solid #4a4a4a; }
.hc { background: #f5f5f5; border-right: 1px solid #cbcbcb; display: flex; align-items: center; justify-content: space-between; padding: 0 10px 0 2px; line-height: 14px; color: #434e58; letter-spacing: -.15px; }
.g1 .hc { padding-top: 2px; }
.hc .ic-fsm { width: 20px; height: 20px; }
.c { display: flex; align-items: center; padding-left: 2.500px; white-space: nowrap; letter-spacing: -.18px; }
.c.first { padding-left: 36px; letter-spacing: -.3px; }
.c.num { justify-content: flex-end; padding-right: 3px; }
.r-sel { background: #9ce6ff; }
.r-sel::after { content: ""; position: absolute; inset: 0 0 -1px 13px; border: 1px dotted #505050; }
.r-red { color: #f2151f; }
.r-blue { background: #d6f1ff; }
.r-lime { background: #d1ef67; }
.gridfill { flex: 1; }
.sumbar { height: 46px; flex: none; background: #f3f3f3; border-top: 2px solid #d2d2d2; display: flex; justify-content: flex-end; align-items: center; gap: 6px; padding-right: 3px; }
.top .sumbar { margin-right: 18px; }
.bottom .sumbar { margin-right: 17px; margin-bottom: 2px; height: 45px; }
.sum { height: 38px; background: #fff; border: 2px solid #dcdcdc; display: flex; align-items: center; justify-content: flex-end; padding-right: 6px; letter-spacing: -.1px; }
.s-main { width: 119px; }
.s1 { width: 126px; }
.s2 { width: 141px; }
.s3 { width: 146px; }

.splitter { height: 10px; flex: none; position: relative; }
.splitter::after { content: ""; position: absolute; left: 550px; top: 4px; width: 20px; border-top: 1px dotted #888; }

.tabs { height: 45px; flex: none; display: flex; margin-left: 1px; gap: 1px; }
.tab { display: flex; align-items: center; height: 100%; background: #f4f4f4; border: 2px solid #cfcfcf; border-bottom: 0; border-left-width: 1px; color: #6d7780; padding: 2px 0 0 11px; gap: 9px; white-space: nowrap; letter-spacing: -.1px; }
.tab svg { width: 15px; height: 18px; }
.tab.active { width: 86px; background: #fff; border: 0; border-top: 3px solid #12a5f0; border-right: 1px solid #cfcfcf; color: #1ea4ee; height: 47px; position: relative; z-index: 1; padding: 0 0 2px 14px; }
.t2 { width: 146px; }
.t3 { width: 122px; }
.t4 { width: 162px; }
.t5 { width: 100px; }
.t6 { width: 82px; }
.t7 { width: 102px; }
.t8 { width: 107px; }

/* doc tabs */
.doctabs { height: 52px; flex: none; border-top: 2px solid #d2d2d2; margin-right: 21px; margin-left: 21px; position: relative; }
.doctab { position: absolute; left: 1px; top: -4px; width: 161px; height: 56px; background: #fff; border: 1px solid #cfcfcf; border-bottom: 2px solid #12a5f0; display: flex; align-items: center; padding-left: 16px; color: #1ea4ee; }
.doctab svg { width: 30px; height: 36px; margin-right: 12px; }
.dt-x { margin-left: 19px; font-size: 13px; font-weight: 700; color: #1f9be0; }
.dt-label { letter-spacing: -.25px; }

/* status */
.status { height: 29px; flex: none; display: flex; align-items: center; padding-left: 28px; color: #4a525a; letter-spacing: -.15px; }
.st { display: flex; align-items: center; height: 21px; border-right: 1px solid #c9c9c9; white-space: nowrap; }
.st1 { width: 201px; gap: 22px; }
.st2 { width: 170px; padding-left: 15px; gap: 22px; }
.st3 { width: 174px; padding-left: 14px; gap: 20px; }
.st4 { width: 154px; padding-left: 18px; gap: 22px; }
.st5 { width: 148px; padding-left: 35px; }
.s-info { width: 19px; height: 19px; }
.s-db { width: 15px; height: 19px; }
.s-user { width: 18px; height: 18px; }
.s-cal { width: 18px; height: 20px; position: relative; display: block; }
.s-cal svg { width: 18px; height: 20px; }
.s-cal b { position: absolute; left: 2px; top: 6px; font: 700 10px "Liberation Sans", sans-serif; color: #2c3a5a; }
.st-end { margin-left: auto; width: 52px; height: 21px; border-left: 1px solid #c9c9c9; position: relative; }
.resize { position: absolute; right: 22px; bottom: 0; width: 14px; height: 14px; background-image: radial-gradient(circle, #666 1px, transparent 1.100px); background-size: 4px 4px; clip-path: polygon(100% 0, 100% 100%, 0 100%); }
```
